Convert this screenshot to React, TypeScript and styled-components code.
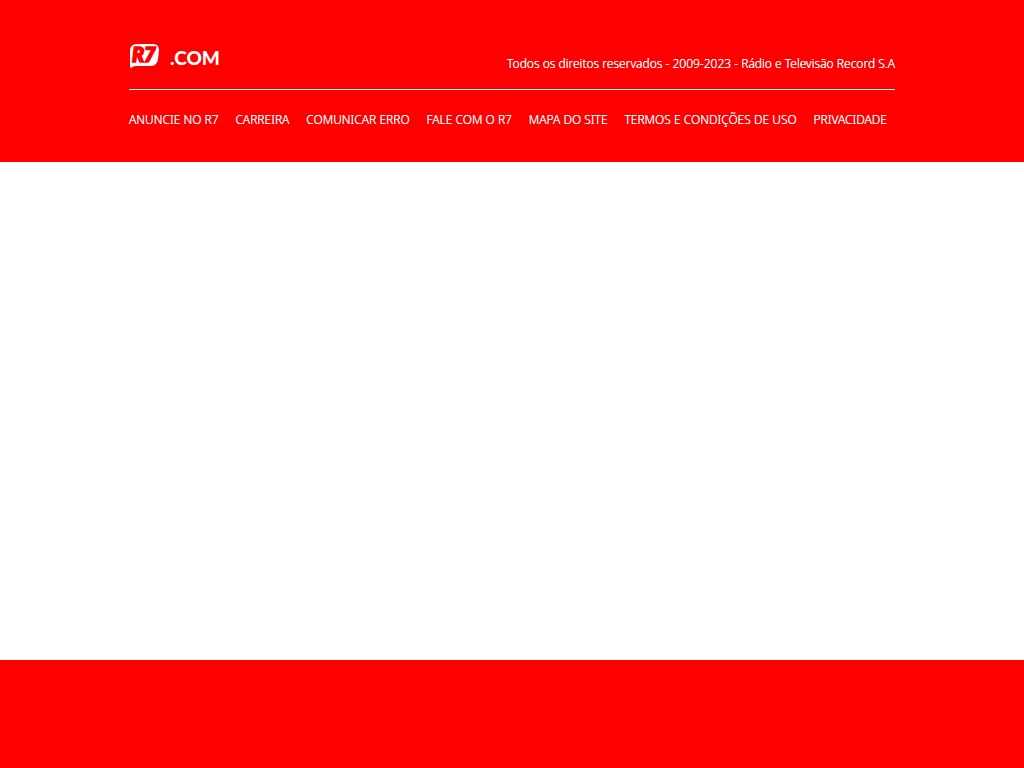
import React from "react";
import styled, { createGlobalStyle } from "styled-components";

const GlobalStyle = createGlobalStyle`
  * { box-sizing: border-box; }
  body {
    margin: 0;
    background: #fff;
    color: #fff;
    font-family: "Noto Sans", "Open Sans", sans-serif;
    font-size: 12px;
    font-weight: 300;
    line-height: 16px;
  }
`;

const Page = styled.div`
  display: flex;
  flex-direction: column;
  min-height: 100vh;
`;

/* The unblurred shadow strengthens the light type on the red ground. */
const Footer = styled.footer`
  padding: 36px 24px 34px;
  background: #f00;
  text-shadow: 0 0 0 #fff;
`;

const Inner = styled.div`
  max-width: 766px;
  margin: 0 auto;
`;

const Top = styled.div`
  display: flex;
  align-items: flex-end;
  justify-content: space-between;
  padding: 7px 0 17px;
  border-bottom: 1px solid #fff;
`;

const Brand = styled.a`
  display: flex;
  align-items: center;
  gap: 10px;
  color: #fff;
  text-decoration: none;
  text-shadow: none;
`;

const Mark = styled.svg`
  display: block;
  width: 31px;
  height: 29px;
  font: italic 900 20px Lato, sans-serif;
`;

const Domain = styled.span`
  font: 900 19px/28px Lato, sans-serif;
`;

const Copyright = styled.p`
  margin: 0;
`;

const Links = styled.ul`
  display: flex;
  flex-wrap: wrap;
  justify-content: space-between;
  gap: 8px 12px;
  margin: 0;
  padding: 22px 8px 0 0;
  list-style: none;
`;

const FooterLink = styled.a`
  color: #fff;
  text-decoration: none;
  text-transform: uppercase;
`;

const Content = styled.main`
  flex: 1;
`;

const BottomBand = styled.div`
  height: 108px;
  background: #f00;
`;

const links = [
  "Anuncie no R7",
  "Carreira",
  "Comunicar erro",
  "Fale com o R7",
  "Mapa do site",
  "Termos e condições de uso",
  "Privacidade",
];

export default function App() {
  return (
    <Page>
      <GlobalStyle />
      <Footer>
        <Inner>
          <Top>
            <Brand href="#">
              <Mark viewBox="0 1 31 29" role="img" aria-label="R7">
                <path
                  d="M8 2H24Q30 2 30 8L29 17Q28 24 22 24H7Q4 24 2 26Q1 26 1 24V9Q1 2 8 2Z"
                  fill="#fff"
                />
                <text x="3" y="20" fill="#f00" stroke="#f00" strokeWidth="1.6">
                  R7
                </text>
              </Mark>
              <Domain>.COM</Domain>
            </Brand>
            <Copyright>
              Todos os direitos reservados - 2009-2023 - Rádio e Televisão Record S.A
            </Copyright>
          </Top>
          <nav aria-label="Rodapé">
            <Links>
              {links.map((label) => (
                <li key={label}>
                  <FooterLink href="#">{label}</FooterLink>
                </li>
              ))}
            </Links>
          </nav>
        </Inner>
      </Footer>
      <Content />
      <BottomBand />
    </Page>
  );
}
